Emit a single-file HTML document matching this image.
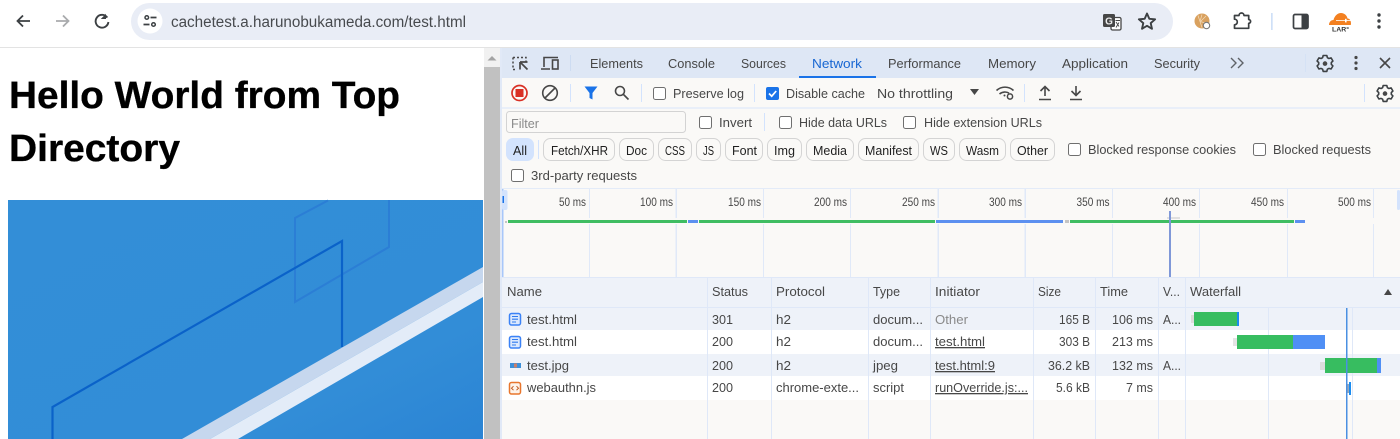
<!DOCTYPE html>
<html lang="en"><head><meta charset="utf-8"><title>DevTools Network</title>
<style>
html,body{margin:0;padding:0;width:1400px;height:439px;overflow:hidden;background:#fff}
svg{display:block}
text{font-family:"Liberation Sans",sans-serif;font-size:13px;fill:#474747}
.d{fill:#1f1f1f}
.c{text-anchor:middle}
.r{text-anchor:end}
.t{font-size:12px}
.h{font-weight:bold;font-size:38px;fill:#000;stroke:#000;stroke-width:.35px}
.i{fill:none;stroke:#474747;stroke-width:1.6}
.b{fill:#fff;stroke:#6f6f6f;stroke-width:1}
.chip{fill:#faf9f7;stroke:#d4d4d4;stroke-width:1}
.u{text-decoration:underline}
</style></head><body>
<svg width="1400" height="439" viewBox="0 0 1400 439" xmlns="http://www.w3.org/2000/svg">
<rect width="1400" height="439" fill="#fff"/>

<!-- browser toolbar -->
<rect x="0" y="47" width="1400" height="1" fill="#e3e3e3"/>
<rect x="131" y="3" width="1042" height="37" rx="18.5" fill="#e9edf6"/>
<circle cx="150" cy="21" r="12.5" fill="#fff"/>
<g fill="none" stroke="#3c4043" stroke-width="1.800">
<path d="M30 21H17.5M23 15.5 17.5 21 23 26.5"/>
<path d="M56 21H68.5M63 15.5 68.5 21 63 26.5" stroke="#a9abad"/>
<path d="M107.3 17.6A6.4 6.4 0 1 0 108.4 22" stroke-width="1.900"/>
<circle cx="146.800" cy="17.500" r="1.800" stroke-width="1.500"/><path d="M150.500 17.500h6M143.500 24.500h6" stroke-width="1.800"/>
<circle cx="153.500" cy="24.500" r="1.800" stroke-width="1.500"/>
</g>
<path d="M106 13.800v5.200h-5.200z" fill="#3c4043"/>
<text x="171" y="27" textLength="295" lengthAdjust="spacingAndGlyphs" style="font-size:15.500px;fill:#474a4e">cachetest.a.harunobukameda.com/test.html</text>

<!-- translate -->
<rect x="1111" y="17.500" width="10" height="12.500" rx="1.500" fill="#fff" stroke="#474747" stroke-width="1.300"/>
<rect x="1103" y="14" width="12" height="13" rx="1.500" fill="#474747"/>
<text x="1109" y="24.500" class="c" style="font-size:10px;font-weight:bold;fill:#eee">G</text>
<path d="M1115.500 20.500h4.500M1116 27.500l3-5M1116 22l3 4.500" fill="none" stroke="#474747" stroke-width=".9"/>
<!-- star -->
<path d="M1147 13.500l2.300 5.300 5.800.5-4.400 3.800 1.300 5.700-5-3-5 3 1.300-5.700-4.400-3.800 5.800-.5z" fill="none" stroke="#3c4043" stroke-width="1.900" stroke-linejoin="round"/>
<!-- yarn extension -->
<circle cx="1202" cy="21" r="7.500" fill="#d9a15f"/>
<path d="M1198 15.500l4 12M1202 14.500l-2 7 7.500 2M1206 16l-5 5" fill="none" stroke="#f3ddbd" stroke-width=".7"/>
<circle cx="1206.500" cy="25.500" r="3.200" fill="#fff" stroke="#7a7a7a" stroke-width="1.100"/>
<!-- puzzle -->
<path d="M1234.500 15.500h4.500a2.500 2.500 0 0 1 5 0h4.700v4a1.900 1.900 0 0 1 0 3.800v5h-14.200v-3.500a2.800 2.800 0 0 0 0-5.600z" fill="none" stroke="#3c4043" stroke-width="1.700" stroke-linejoin="round"/>
<rect x="1271" y="13" width="1.700" height="17" fill="#cfe0f7"/>
<!-- side panel -->
<rect x="1293.500" y="14.500" width="14.500" height="14" rx="1.500" fill="#fff" stroke="#3c4043" stroke-width="1.700"/>
<rect x="1301.500" y="14.500" width="6.500" height="14" fill="#3c4043"/>
<!-- cloudflare -->
<path d="M1329 25c0-3 2-5 4.500-5 1-4 4-7 7.500-7 3.500 0 6 2.500 6.500 5.500 2.500 0 3.500 2.500 3.500 5l-.2 1.500z" fill="#f38020"/>
<rect x="1336" y="20.200" width="15" height=".8" fill="#fff"/><rect x="1345" y="18.800" width="1.600" height="3.600" fill="#fff"/>
<text x="1332" y="31.500" style="font-size:6.500px;font-weight:bold;fill:#333" textLength="17" lengthAdjust="spacingAndGlyphs">LAR°</text>
<g fill="#3c4043"><circle cx="1379" cy="15" r="1.700"/><circle cx="1379" cy="21" r="1.700"/><circle cx="1379" cy="27" r="1.700"/></g>

<!-- page content -->
<text x="9" y="108" class="h" textLength="391" lengthAdjust="spacingAndGlyphs">Hello World from Top</text>
<text x="9" y="161" class="h" textLength="171" lengthAdjust="spacingAndGlyphs">Directory</text>
<defs><linearGradient id="bg" x1="0" y1="0" x2="1" y2="1"><stop offset="0" stop-color="#338ed7"/><stop offset=".75" stop-color="#328dd7"/><stop offset="1" stop-color="#2b84d4"/></linearGradient></defs>
<rect x="8" y="200" width="475" height="239" fill="url(#bg)"/>
<path d="M328 200.500 295 218v84l94-55v-47" fill="none" stroke="#2b7ed5" stroke-width="2"/>
<path d="M52.500 439v-32L342 241v106" fill="none" stroke="#0a62c9" stroke-width="2.200"/>
<path d="M483 267 182 439h28L483 282z" fill="#c6d7ee"/>
<path d="M483 282 210 439h28L483 297z" fill="#e3ecf8"/>
<!-- scrollbar -->
<rect x="484" y="48" width="16" height="391" fill="#f1f1f1"/>
<rect x="484" y="67" width="16" height="372" fill="#c1c1c1"/>
<path d="M492 56l4.500 4.500h-9z" fill="#a3a3a3"/>

<!-- devtools -->
<rect x="500" y="48" width="900" height="391" fill="#faf9f7"/>
<rect x="500" y="48" width="900" height="30" fill="#dee7f5"/>
<rect x="500" y="48" width="2" height="391" fill="#e1e9f7"/>
<rect x="502" y="107" width="898" height="2" fill="#e9eff9"/>
<rect x="502" y="188" width="898" height="1" fill="#e3ebf8"/>

<!-- tab bar -->
<g fill="none" stroke="#474747" stroke-width="1.500">
<path d="M513 57.500h13v4M513 69.500h2M513 57.500v12" stroke-dasharray="2 2"/>
<path d="M520 62l7.500 0M520 62v7.500M520 62l7.500 7.500" stroke-width="1.700"/>
<path d="M544 67V57.500h14M541 69h9" stroke-width="1.600"/>
<rect x="552.500" y="60" width="5.500" height="9" stroke-width="1.600"/>
</g>
<rect x="570" y="55" width="1" height="16" fill="#cddcf2"/>
<text x="590" y="68" lengthAdjust="spacingAndGlyphs" textLength="53">Elements</text>
<text x="668" y="68" lengthAdjust="spacingAndGlyphs" textLength="47">Console</text>
<text x="741" y="68" lengthAdjust="spacingAndGlyphs" textLength="45">Sources</text>
<text x="812" y="68" lengthAdjust="spacingAndGlyphs" textLength="50" style="fill:#1967d2">Network</text>
<text x="888" y="68" lengthAdjust="spacingAndGlyphs" textLength="73">Performance</text>
<text x="988" y="68" lengthAdjust="spacingAndGlyphs" textLength="48">Memory</text>
<text x="1062" y="68" lengthAdjust="spacingAndGlyphs" textLength="66">Application</text>
<text x="1154" y="68" lengthAdjust="spacingAndGlyphs" textLength="46">Security</text>
<rect x="799" y="76" width="77" height="2" fill="#1a73e8"/>
<path d="M1231 58l5 5-5 5M1238 58l5 5-5 5" fill="none" stroke="#5f6368" stroke-width="1.400"/>
<rect x="1305" y="54" width="1" height="18" fill="#d5e2f5"/>
<g id="gear"><path d="M1323.200 55.500h3.600l.6 2.200 1.500.8 2.200-.6 1.800 3.100-1.600 1.600v1.700l1.600 1.600-1.800 3.100-2.200-.6-1.500.8-.6 2.200h-3.600l-.6-2.200-1.500-.8-2.200.6-1.800-3.100 1.600-1.600v-1.700l-1.600-1.600 1.800-3.100 2.200.6 1.500-.8z" class="i" stroke-linejoin="round" style="stroke:#3c4043"/><circle cx="1325" cy="63.600" r="2.300" fill="#474747"/></g>
<g fill="#474747"><circle cx="1356" cy="57.500" r="1.600"/><circle cx="1356" cy="63" r="1.600"/><circle cx="1356" cy="68.500" r="1.600"/></g>
<path d="M1380 58l10 10M1390 58l-10 10" fill="none" stroke="#474747" stroke-width="1.600"/>

<!-- toolbar -->
<circle cx="519.500" cy="93" r="7.500" fill="none" stroke="#d93025" stroke-width="1.700"/>
<rect x="515.500" y="89" width="8" height="8" fill="#d93025"/>
<circle cx="550" cy="93" r="7.300" class="i"/><path d="M545 98l10-10" class="i"/>
<rect x="570" y="84" width="1" height="18" fill="#d3e3fd"/>
<path d="M584.500 86.500h13l-5 6.500v6.500l-3-1.500v-5z" fill="#1a73e8"/>
<circle cx="620" cy="91" r="4.500" class="i"/><path d="M623.500 94.500l5 5" class="i" stroke-width="2"/>
<rect x="641" y="84" width="1" height="18" fill="#d3e3fd"/>
<rect x="653.500" y="87.500" width="12" height="12" rx="2" class="b"/>
<text x="673" y="98" lengthAdjust="spacingAndGlyphs" textLength="71">Preserve log</text>
<rect x="754" y="84" width="1" height="18" fill="#d3e3fd"/>
<rect x="766" y="87" width="13" height="13" rx="2" fill="#1a73e8"/>
<path d="M769 93.500l2.700 2.700 4.500-5.200" fill="none" stroke="#fff" stroke-width="1.700"/>
<text x="786" y="98" lengthAdjust="spacingAndGlyphs" textLength="79">Disable cache</text>
<text x="877" y="98" lengthAdjust="spacingAndGlyphs" textLength="76">No throttling</text>
<path d="M970 89h9l-4.500 6z" fill="#474747"/>
<path d="M996.500 90.500c5-4.500 12-4.500 17 0M999.500 94c3-2.500 7-2.500 9.500-.8" class="i"/>
<circle cx="1004.500" cy="95.500" r="1" fill="#474747"/>
<circle cx="1010" cy="96.500" r="2.600" fill="none" stroke="#474747" stroke-width="1.500"/>
<rect x="1024" y="84" width="1" height="18" fill="#d3e3fd"/>
<path d="M1045 96V86.500M1040.500 91l4.500-4.500 4.500 4.500M1039 99.500h12" class="i"/>
<path d="M1076 86v9.500M1071.500 91l4.500 4.500 4.500-4.500M1070 99.500h12" class="i"/>
<rect x="1364" y="84" width="1" height="18" fill="#d3e3fd"/>
<use href="#gear" x="60" y="30"/>

<!-- filter row -->
<rect x="506.500" y="111.500" width="179" height="21" rx="3" fill="#faf9f7" stroke="#d3d3d3"/>
<text x="511" y="128" lengthAdjust="spacingAndGlyphs" textLength="28" style="fill:#8a8a8a">Filter</text>
<rect x="699.500" y="116.500" width="12" height="12" rx="2" class="b"/>
<text x="719" y="127" lengthAdjust="spacingAndGlyphs" textLength="33">Invert</text>
<rect x="764" y="113" width="1" height="18" fill="#d3e3fd"/>
<rect x="779.500" y="116.500" width="12" height="12" rx="2" class="b"/>
<text x="799" y="127" lengthAdjust="spacingAndGlyphs" textLength="88">Hide data URLs</text>
<rect x="903.500" y="116.500" width="12" height="12" rx="2" class="b"/>
<text x="924" y="127" lengthAdjust="spacingAndGlyphs" textLength="118">Hide extension URLs</text>

<!-- chips -->
<rect x="506" y="138" width="28" height="23" rx="7" fill="#d3e3fd"/>
<text x="513" y="155" class="d" lengthAdjust="spacingAndGlyphs" textLength="14">All</text>
<rect x="538" y="140" width="1" height="19" fill="#d3e3fd"/>
<rect x="543.500" y="138.500" width="71" height="22" rx="7" class="chip"/><text x="551" y="155" class="d" lengthAdjust="spacingAndGlyphs" textLength="57">Fetch/XHR</text>
<rect x="619.500" y="138.500" width="34" height="22" rx="7" class="chip"/><text x="626" y="155" class="d" lengthAdjust="spacingAndGlyphs" textLength="21">Doc</text>
<rect x="658.500" y="138.500" width="33" height="22" rx="7" class="chip"/><text x="665" y="155" class="d" lengthAdjust="spacingAndGlyphs" textLength="20">CSS</text>
<rect x="696.500" y="138.500" width="24" height="22" rx="7" class="chip"/><text x="703" y="155" class="d" lengthAdjust="spacingAndGlyphs" textLength="11">JS</text>
<rect x="725.500" y="138.500" width="37" height="22" rx="7" class="chip"/><text x="732" y="155" class="d" lengthAdjust="spacingAndGlyphs" textLength="25">Font</text>
<rect x="767.500" y="138.500" width="34" height="22" rx="7" class="chip"/><text x="774" y="155" class="d" lengthAdjust="spacingAndGlyphs" textLength="21">Img</text>
<rect x="806.500" y="138.500" width="47" height="22" rx="7" class="chip"/><text x="813" y="155" class="d" lengthAdjust="spacingAndGlyphs" textLength="34">Media</text>
<rect x="858.500" y="138.500" width="60" height="22" rx="7" class="chip"/><text x="865" y="155" class="d" lengthAdjust="spacingAndGlyphs" textLength="47">Manifest</text>
<rect x="923.500" y="138.500" width="31" height="22" rx="7" class="chip"/><text x="930" y="155" class="d" lengthAdjust="spacingAndGlyphs" textLength="18">WS</text>
<rect x="959.500" y="138.500" width="46" height="22" rx="7" class="chip"/><text x="966" y="155" class="d" lengthAdjust="spacingAndGlyphs" textLength="33">Wasm</text>
<rect x="1010.500" y="138.500" width="44" height="22" rx="7" class="chip"/><text x="1017" y="155" class="d" lengthAdjust="spacingAndGlyphs" textLength="31">Other</text>
<rect x="1068.500" y="143.500" width="12" height="12" rx="2" class="b"/>
<text x="1088" y="154" lengthAdjust="spacingAndGlyphs" textLength="148">Blocked response cookies</text>
<rect x="1253.500" y="143.500" width="12" height="12" rx="2" class="b"/>
<text x="1273" y="154" lengthAdjust="spacingAndGlyphs" textLength="98">Blocked requests</text>
<rect x="511.500" y="169.500" width="12" height="12" rx="2" class="b"/>
<text x="531" y="180" lengthAdjust="spacingAndGlyphs" textLength="106">3rd-party requests</text>

<!-- overview -->
<g fill="#e0e9f8">
<rect x="589" y="189" width="1" height="88"/><rect x="675.500" y="189" width="1.500" height="88"/><rect x="763" y="189" width="1" height="88"/><rect x="850" y="189" width="1" height="88"/><rect x="937.500" y="189" width="1.500" height="88"/><rect x="1024.500" y="189" width="1.500" height="88"/><rect x="1112" y="189" width="1" height="88"/><rect x="1199" y="189" width="1" height="88"/><rect x="1287" y="189" width="1" height="88"/><rect x="1373" y="189" width="1" height="88"/>
</g>
<text x="559" y="206" class="t" lengthAdjust="spacingAndGlyphs" textLength="27">50 ms</text>
<text x="640" y="206" class="t" lengthAdjust="spacingAndGlyphs" textLength="33">100 ms</text>
<text x="728" y="206" class="t" lengthAdjust="spacingAndGlyphs" textLength="33">150 ms</text>
<text x="814" y="206" class="t" lengthAdjust="spacingAndGlyphs" textLength="33">200 ms</text>
<text x="902" y="206" class="t" lengthAdjust="spacingAndGlyphs" textLength="33">250 ms</text>
<text x="989" y="206" class="t" lengthAdjust="spacingAndGlyphs" textLength="33">300 ms</text>
<text x="1076.500" y="206" class="t" lengthAdjust="spacingAndGlyphs" textLength="33">350 ms</text>
<text x="1163" y="206" class="t" lengthAdjust="spacingAndGlyphs" textLength="33">400 ms</text>
<text x="1251" y="206" class="t" lengthAdjust="spacingAndGlyphs" textLength="33">450 ms</text>
<text x="1338" y="206" class="t" lengthAdjust="spacingAndGlyphs" textLength="33">500 ms</text>
<rect x="502" y="218" width="898" height="6" fill="#faf9f7"/>
<rect x="502" y="189" width="1.500" height="88" fill="#a8c7fa"/>
<rect x="502" y="190" width="5.500" height="20" rx="2" fill="#d3e3fd"/>
<rect x="502.500" y="196" width="1.500" height="7" fill="#1a73e8"/>
<rect x="1397" y="190" width="3" height="20" rx="1.500" fill="#d3e3fd"/>
<rect x="505" y="221" width="2" height="2" fill="#c4c4c4"/>
<rect x="508" y="220" width="179" height="3" fill="#3fbd62"/>
<rect x="688" y="220" width="10" height="3" fill="#5c90f0"/>
<rect x="699" y="220" width="236" height="3" fill="#3fbd62"/>
<rect x="936" y="220" width="127" height="3" fill="#5c90f0"/>
<rect x="1065" y="220" width="4" height="3" fill="#c4c4c4"/>
<rect x="1070" y="220" width="224" height="3" fill="#3fbd62"/>
<rect x="1295" y="220" width="10" height="3" fill="#5c90f0"/>
<rect x="1167" y="217" width="13" height="2" fill="#e0e0e0"/>
<rect x="1169" y="211" width="2" height="66" fill="#7f98d8"/>

<!-- table -->
<rect x="502" y="278" width="898" height="30" fill="#eef2f9"/>
<rect x="502" y="277" width="898" height="1" fill="#dfe8f8"/>
<rect x="502" y="307" width="898" height="1" fill="#dfe8f8"/>
<rect x="502" y="308" width="898" height="22" fill="#eef2f9"/>
<rect x="502" y="330" width="898" height="24" fill="#fff"/>
<rect x="502" y="354" width="898" height="22" fill="#eef2f9"/>
<rect x="502" y="376" width="898" height="24" fill="#fff"/>
<g fill="#dfe8f8">
<rect x="707" y="278" width="1" height="161"/><rect x="771" y="278" width="1" height="161"/><rect x="868" y="278" width="1" height="161"/><rect x="930" y="278" width="1" height="161"/><rect x="1033" y="278" width="1" height="161"/><rect x="1095" y="278" width="1" height="161"/><rect x="1158" y="278" width="1" height="161"/><rect x="1185" y="278" width="1" height="161"/>
<rect x="1268" y="308" width="1" height="131"/><rect x="1352" y="308" width="1" height="131"/>
</g>
<text x="507" y="296" lengthAdjust="spacingAndGlyphs" textLength="35">Name</text>
<text x="712" y="296" lengthAdjust="spacingAndGlyphs" textLength="36">Status</text>
<text x="776" y="296" lengthAdjust="spacingAndGlyphs" textLength="49">Protocol</text>
<text x="873" y="296" lengthAdjust="spacingAndGlyphs" textLength="27">Type</text>
<text x="935" y="296" lengthAdjust="spacingAndGlyphs" textLength="45">Initiator</text>
<text x="1038" y="296" lengthAdjust="spacingAndGlyphs" textLength="23">Size</text>
<text x="1100" y="296" lengthAdjust="spacingAndGlyphs" textLength="28">Time</text>
<text x="1163" y="296" lengthAdjust="spacingAndGlyphs" textLength="17">V...</text>
<text x="1190" y="296" lengthAdjust="spacingAndGlyphs" textLength="51">Waterfall</text>
<path d="M1384 295l4-6 4 6z" fill="#474747"/>

<!-- row icons -->
<g id="doc"><rect x="509.500" y="313.500" width="11" height="11.500" rx="2" fill="#dbe8fd" stroke="#3b82f6" stroke-width="1.500"/><path d="M512 316.500h6M512 319.200h6M512 322h4" stroke="#2f7bf0" stroke-width="1.100" fill="none"/></g>
<use href="#doc" y="23"/>
<rect x="510" y="363" width="11" height="5" fill="#3d8fd8"/><rect x="514" y="363.500" width="3" height="4" fill="#c97f6a"/>
<rect x="509.500" y="382.500" width="11" height="11.500" rx="2" fill="#fdf3ea" stroke="#e8762d" stroke-width="1.500"/>
<path d="M513.500 386.200l-2 2 2 2M516.500 386.200l2 2-2 2" stroke="#c2571a" stroke-width="1" fill="none"/>

<!-- row text -->
<text x="527" y="324" lengthAdjust="spacingAndGlyphs" textLength="50">test.html</text><text x="712" y="324" lengthAdjust="spacingAndGlyphs" textLength="21">301</text><text x="776" y="324" lengthAdjust="spacingAndGlyphs" textLength="15">h2</text><text x="873" y="324" lengthAdjust="spacingAndGlyphs" textLength="50">docum...</text><text x="935" y="324" lengthAdjust="spacingAndGlyphs" textLength="33" style="fill:#8a8a8a">Other</text><text x="1059" y="324" lengthAdjust="spacingAndGlyphs" textLength="31">165 B</text><text x="1112" y="324" lengthAdjust="spacingAndGlyphs" textLength="41">106 ms</text><text x="1163" y="324" lengthAdjust="spacingAndGlyphs" textLength="18">A...</text>
<text x="527" y="346" lengthAdjust="spacingAndGlyphs" textLength="50">test.html</text><text x="712" y="346" lengthAdjust="spacingAndGlyphs" textLength="21">200</text><text x="776" y="346" lengthAdjust="spacingAndGlyphs" textLength="15">h2</text><text x="873" y="346" lengthAdjust="spacingAndGlyphs" textLength="50">docum...</text><text x="935" y="346" class="u" lengthAdjust="spacingAndGlyphs" textLength="50">test.html</text><text x="1059" y="346" lengthAdjust="spacingAndGlyphs" textLength="31">303 B</text><text x="1112" y="346" lengthAdjust="spacingAndGlyphs" textLength="41">213 ms</text>
<text x="527" y="370" lengthAdjust="spacingAndGlyphs" textLength="42">test.jpg</text><text x="712" y="370" lengthAdjust="spacingAndGlyphs" textLength="21">200</text><text x="776" y="370" lengthAdjust="spacingAndGlyphs" textLength="15">h2</text><text x="873" y="370" lengthAdjust="spacingAndGlyphs" textLength="25">jpeg</text><text x="935" y="370" class="u" lengthAdjust="spacingAndGlyphs" textLength="60">test.html:9</text><text x="1048" y="370" lengthAdjust="spacingAndGlyphs" textLength="42">36.2 kB</text><text x="1112" y="370" lengthAdjust="spacingAndGlyphs" textLength="41">132 ms</text><text x="1163" y="370" lengthAdjust="spacingAndGlyphs" textLength="18">A...</text>
<text x="527" y="392" lengthAdjust="spacingAndGlyphs" textLength="69">webauthn.js</text><text x="712" y="392" lengthAdjust="spacingAndGlyphs" textLength="21">200</text><text x="776" y="392" lengthAdjust="spacingAndGlyphs" textLength="83">chrome-exte...</text><text x="873" y="392" lengthAdjust="spacingAndGlyphs" textLength="31">script</text><text x="935" y="392" class="u" lengthAdjust="spacingAndGlyphs" textLength="93">runOverride.js:...</text><text x="1056" y="392" lengthAdjust="spacingAndGlyphs" textLength="34">5.6 kB</text><text x="1126" y="392" lengthAdjust="spacingAndGlyphs" textLength="27">7 ms</text>

<!-- waterfall -->
<rect x="1191" y="315" width="3" height="8" fill="#dcdcdc"/><rect x="1194" y="312" width="43" height="14" fill="#37bd60"/><rect x="1237" y="312" width="2" height="14" fill="#1a8cf0"/>
<rect x="1233" y="338" width="4" height="8" fill="#e4e4e4"/><rect x="1237" y="335" width="56" height="14" fill="#37bd60"/><rect x="1293" y="335" width="32" height="14" fill="#4f8ff5"/>
<rect x="1320" y="362" width="5" height="8" fill="#dcdcdc"/><rect x="1325" y="358" width="52" height="15" fill="#37bd60"/><rect x="1377" y="358" width="4" height="15" fill="#4f8ff5"/>
<rect x="1346" y="384" width="3" height="9" fill="#9aa7b8"/><rect x="1349" y="382" width="2" height="13" fill="#1a8cf0"/>
<rect x="1346" y="308" width="1.500" height="131" fill="#4a90e2"/>
</svg>
</body></html>
